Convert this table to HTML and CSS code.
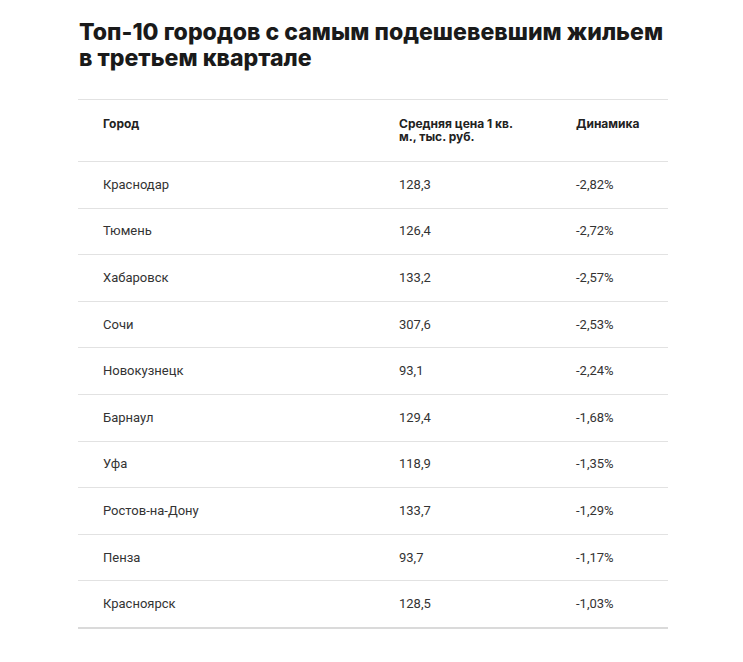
FILE: index.html
```html
<!DOCTYPE html>
<html lang="ru">
<head>
<meta charset="utf-8">
<link rel="stylesheet" href="styles.css">
</head>
<body>
<div class="wrap">
  <h1 class="title">Топ-10 городов с самым подешевевшим жильем в третьем квартале</h1>
  <table class="tbl">
    <thead>
      <tr><th class="c1">Город</th><th class="c2">Средняя цена 1 кв. м., тыс. руб.</th><th class="c3">Динамика</th></tr>
    </thead>
    <tbody>
      <tr><td>Краснодар</td><td>128,3</td><td>-2,82%</td></tr>
      <tr><td>Тюмень</td><td>126,4</td><td>-2,72%</td></tr>
      <tr><td>Хабаровск</td><td>133,2</td><td>-2,57%</td></tr>
      <tr><td>Сочи</td><td>307,6</td><td>-2,53%</td></tr>
      <tr><td>Новокузнецк</td><td>93,1</td><td>-2,24%</td></tr>
      <tr><td>Барнаул</td><td>129,4</td><td>-1,68%</td></tr>
      <tr><td>Уфа</td><td>118,9</td><td>-1,35%</td></tr>
      <tr><td>Ростов-на-Дону</td><td>133,7</td><td>-1,29%</td></tr>
      <tr><td>Пенза</td><td>93,7</td><td>-1,17%</td></tr>
      <tr><td>Красноярск</td><td>128,5</td><td>-1,03%</td></tr>
    </tbody>
  </table>
</div>
</body>
</html>
```
FILE: styles.css
```css
html, body { margin: 0; padding: 0; background: #fff; }
body { font-family: Inter, "Noto Sans", sans-serif; color: #222; }
.wrap { width: 590px; margin-left: 78px; padding-top: 19px; }
.title {
  margin: 0 0 28px 1px;
  font-size: 23.1px;
  line-height: 26px;
  font-weight: 800;
  letter-spacing: 0;
  color: #1a1a1a;
}
.tbl { width: 590px; border-collapse: collapse; table-layout: fixed; }
.tbl th, .tbl td { text-align: left; padding: 0 25px 0 25px; }
.tbl th {
  font-size: 12px; line-height: 13px; font-weight: 700; color: #222;
  vertical-align: top; padding-top: 17px; height: 44px;
  border-top: 1px solid #e2e2e2; border-bottom: 1px solid #e2e2e2;
}
.c1 { width: 246px; }
.c2 { width: 127px; }
.tbl td {
  font-family: Roboto, Inter, sans-serif;
  font-size: 13px; line-height: 16px; color: #333; height: 45.6px;
  border-bottom: 1px solid #e2e2e2; padding-top: 0; padding-bottom: 0;
}
.tbl tbody tr:last-child td { border-bottom: 2px solid #dadada; }
```
